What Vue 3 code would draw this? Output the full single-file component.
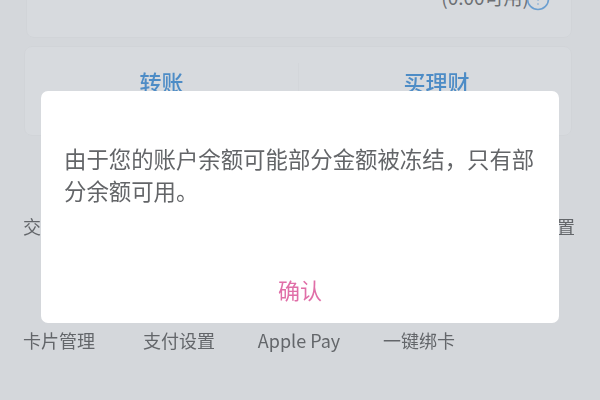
<script setup>
const upper = ['交易记录', '', '', '', '账户设置']
const lower = ['卡片管理', '支付设置', 'Apple Pay', '一键绑卡']
</script>

<template>
  <div class="page">
    <div class="under">
      <section class="card balance">
        <span class="available">(0.00可用)</span>
        <svg class="help" width="24" height="24" viewBox="0 0 24 24" aria-hidden="true">
          <circle cx="12" cy="12" r="10.5" fill="none" stroke="#6c9fd0" stroke-width="1.6" />
          <path d="M9.5 9.5a2.5 2.5 0 1 1 3.6 2.2c-.8.4-1.1.9-1.1 1.8M12 16.5v1" fill="none" stroke="#6c9fd0" stroke-width="1.6" />
        </svg>
      </section>
      <section class="card actions">
        <span class="action">转账</span>
        <span class="action divided">买理财</span>
      </section>
      <div class="menu">
        <span v-for="(label, i) in upper" :key="'u' + i" class="menu-item">{{ label }}</span>
        <span v-for="label in lower" :key="label" class="menu-item">{{ label }}</span>
      </div>
    </div>

    <div class="dialog">
      <p class="message">由于您的账户余额可能部分金额被冻结，只有部分余额可用。</p>
      <button class="confirm" type="button">确认</button>
    </div>
  </div>
</template>

<style scoped>
.page {
  position: relative;
  width: 600px;
  height: 400px;
  overflow: hidden;
  background: #d4d7db;
  font-family: "Noto Sans CJK SC", "Liberation Sans", sans-serif;
}

.under {
  display: flex;
  flex-direction: column;
  filter: blur(0.6px);
}

.card {
  background: #d7dade;
  border: 1px solid #d1d4d8;
  border-radius: 8px;
  box-sizing: border-box;
}

.balance {
  display: flex;
  align-items: flex-end;
  justify-content: flex-end;
  height: 88px;
  margin: -50px 28px 0 26px;
  padding: 0 21px 26px 0;
}

.available {
  margin: 0 -3px 2px 0;
  font-size: 19px;
  line-height: 24px;
  color: #6d7074;
}

.help {
  flex: none;
}

.actions {
  display: grid;
  grid-template-columns: 1fr 1fr;
  align-items: center;
  height: 90px;
  margin: 8px 28px 0 24px;
  padding-bottom: 20px;
}

.action {
  font-size: 22px;
  font-weight: 500;
  line-height: 36px;
  text-align: center;
  color: #4d8cc6;
}

.divided {
  padding-left: 3px;
  border-left: 1px solid #d3d6da;
}

.menu {
  display: grid;
  grid-template-columns: repeat(5, 120px);
  grid-auto-rows: 114px;
  margin: 33px 0 0 -1px;
}

.menu-item {
  align-self: center;
  font-size: 18px;
  line-height: 24px;
  text-align: center;
  white-space: nowrap;
  color: #63666a;
}

.dialog {
  position: absolute;
  top: 91px;
  left: 41px;
  display: flex;
  flex-direction: column;
  width: 518px;
  height: 232px;
  box-sizing: border-box;
  background: #fff;
  border-radius: 7px;
}

.message {
  margin: 0;
  padding: 51px 22px 0 23px;
  font-size: 22.4px;
  line-height: 32px;
  color: #636568;
  filter: blur(0.3px);
}

.confirm {
  margin-top: auto;
  height: 64px;
  padding: 0 0 5px;
  border: 0;
  background: none;
  font-family: inherit;
  font-size: 22px;
  line-height: 32px;
  color: #e06fa8;
  filter: blur(0.3px);
}
</style>
